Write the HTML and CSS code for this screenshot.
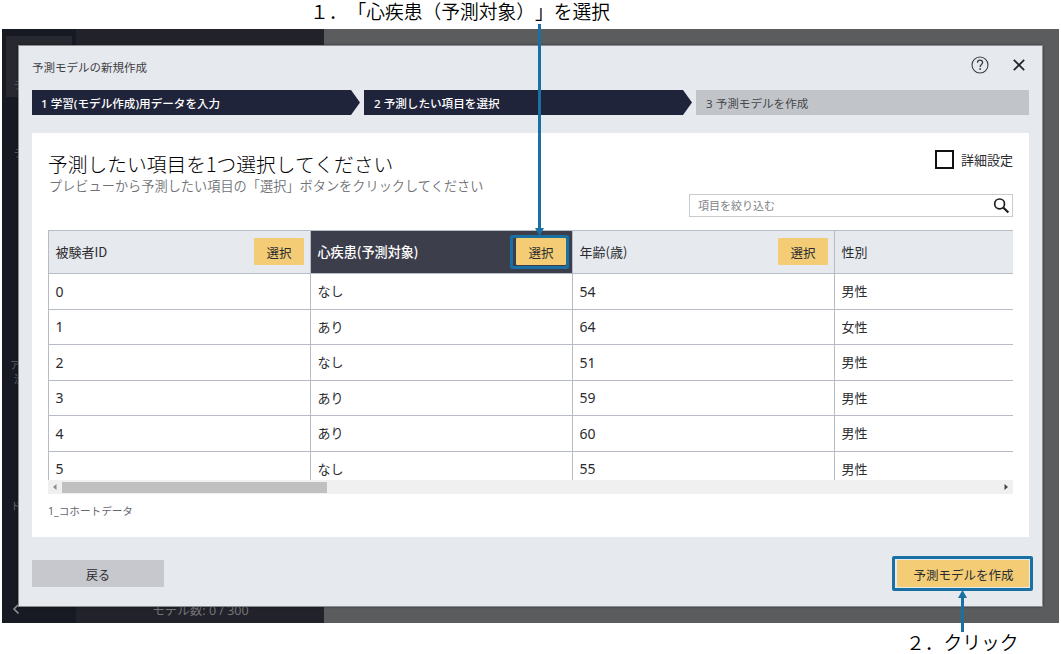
FILE: index.html
```html
<!DOCTYPE html>
<html lang="ja">
<head>
<meta charset="utf-8">
<title>予測モデルの新規作成</title>
<link rel="stylesheet" href="styles.css">
</head>
<body>
<div class="page">
  <div class="app">
    <nav class="sidebar">
      <span class="nav-active"></span>
      <span class="nav-text nav-a">デ</span>
      <span class="nav-text nav-b">デ</span>
      <span class="nav-text nav-c">アプ</span>
      <span class="nav-text nav-e">法</span>
      <span class="nav-text nav-d">ドキ</span>
      <svg class="nav-back" width="8" height="12" viewBox="0 0 8 12"><path d="M6.500 1.500 2 6l4.500 4.500" fill="none" stroke="#92959a" stroke-width="1.500"/></svg>
    </nav>
    <aside class="models"><span class="model-count">モデル数: 0 / 300</span></aside>
    <div class="backdrop"></div>
  </div>

  <section class="modal">
    <header class="modal-head">
      <h1 class="modal-title">予測モデルの新規作成</h1>
      <svg class="icon-help" width="18" height="18" viewBox="0 0 18 18"><circle cx="9" cy="9" r="8" fill="none" stroke="#3c3e42" stroke-width="1.100"/><path d="M6.500 6.700C6.500 5 7.500 4.200 9 4.200s2.600.9 2.600 2.300c0 1.900-2.500 2.100-2.500 4.400" fill="none" stroke="#3c3e42" stroke-width="1.300"/><circle cx="9.100" cy="13" r=".9" fill="#3c3e42"/></svg>
      <svg class="icon-close" width="12" height="12" viewBox="0 0 12 12"><path d="M.8.8l10.400 10.400M11.200.8.8 11.200" stroke="#222326" stroke-width="1.700"/></svg>
    </header>
    <ol class="steps">
      <li class="step step-on">1 学習(モデル作成)用データを入力</li>
      <li class="step step-on">2 予測したい項目を選択</li>
      <li class="step step-off">3 予測モデルを作成</li>
    </ol>
    <div class="content">
      <div class="intro">
        <div class="intro-text">
          <h2 class="heading">予測したい項目を1つ選択してください</h2>
          <p class="lead">プレビューから予測したい項目の「選択」ボタンをクリックしてください</p>
        </div>
        <label class="advanced"><span class="checkbox"></span><span class="advanced-text">詳細設定</span></label>
      </div>
      <div class="search">
        <span class="search-hint">項目を絞り込む</span>
        <svg width="17" height="17" viewBox="0 0 17 17"><circle cx="6.600" cy="6.900" r="4.900" fill="none" stroke="#1d1e21" stroke-width="1.700"/><path d="M10.200 10.500l5.200 5" stroke="#1d1e21" stroke-width="2.200"/></svg>
      </div>
      <div class="table">
        <div class="row row-head">
          <div class="cell">被験者ID<span class="pick">選択</span></div>
          <div class="cell cell-target">心疾患(予測対象)<span class="pick">選択</span></div>
          <div class="cell">年齢(歳)<span class="pick">選択</span></div>
          <div class="cell">性別</div>
        </div>
        <div class="row"><div class="cell num">0</div><div class="cell">なし</div><div class="cell num">54</div><div class="cell">男性</div></div>
        <div class="row"><div class="cell num">1</div><div class="cell">あり</div><div class="cell num">64</div><div class="cell">女性</div></div>
        <div class="row"><div class="cell num">2</div><div class="cell">なし</div><div class="cell num">51</div><div class="cell">男性</div></div>
        <div class="row"><div class="cell num">3</div><div class="cell">あり</div><div class="cell num">59</div><div class="cell">男性</div></div>
        <div class="row"><div class="cell num">4</div><div class="cell">あり</div><div class="cell num">60</div><div class="cell">男性</div></div>
        <div class="row"><div class="cell num">5</div><div class="cell">なし</div><div class="cell num">55</div><div class="cell">男性</div></div>
      </div>
      <div class="scrollbar">
        <svg width="14" height="14" viewBox="0 0 14 14"><path d="M8.500 4v6l-3.500-3z" fill="#8b8b8b"/></svg>
        <span class="thumb"></span>
        <svg width="14" height="14" viewBox="0 0 14 14"><path d="M5.500 4v6L9 7z" fill="#444"/></svg>
      </div>
      <p class="source">1_コホートデータ</p>
    </div>
    <footer class="modal-foot">
      <span class="btn btn-back">戻る</span>
      <span class="btn btn-create">予測モデルを作成</span>
    </footer>
  </section>

  <p class="note note-one">１．「心疾患（予測対象）」を選択</p>
  <svg class="arrow arrow-one" width="10" height="212" viewBox="0 0 10 212"><path d="M4.500 0v206" stroke="#1a70a3" stroke-width="3"/><path d="M0 204h9L4.500 212z" fill="#1a70a3"/></svg>
  <span class="ring ring-one"></span>
  <p class="note note-two">２．クリック</p>
  <svg class="arrow arrow-two" width="10" height="42" viewBox="0 0 10 42"><path d="M4.500 6v36" stroke="#1a70a3" stroke-width="3"/><path d="M0 8h9L4.500 0z" fill="#1a70a3"/></svg>
  <span class="ring ring-two"></span>
</div>
</body>
</html>
```
FILE: styles.css
```css
* { box-sizing: border-box; }
body { margin: 0; background: #fff; font-family: "Noto Sans", "Noto Sans CJK JP", sans-serif; color: #2b2c30; }
h1, h2, p, ol { margin: 0; padding: 0; font-weight: 400; }
svg { display: block; flex: none; }
.page { position: relative; width: 1061px; height: 654px; padding: 29px 2px 0; overflow: hidden; white-space: nowrap; }

.app { display: flex; height: 594px; }
.sidebar { position: relative; width: 74px; background: #171a22; overflow: hidden; }
.nav-active { display: block; width: 66px; height: 61px; margin: 7px 4px; background: #272830; }
.nav-text { position: absolute; font: 10px/13px "Noto Sans CJK JP", sans-serif; color: #65686e; }
.nav-a { left: 12px; top: 49px; }
.nav-b { left: 12px; top: 117px; }
.nav-c { left: 8px; top: 329px; }
.nav-e { left: 12px; top: 343px; }
.nav-d { left: 9px; top: 470px; }
.nav-back { position: absolute; left: 10px; top: 574px; }
.models { display: flex; align-items: flex-end; justify-content: center; width: 248px; background: #22222a; }
.model-count { font-size: 12.500px; line-height: 18px; padding: 0 0 3px 1px; color: #737479; }
.backdrop { flex: 1; background: #5b5c5e; }

.modal { position: absolute; left: 19px; top: 46px; width: 1023px; height: 560px; padding: 0 13px; background: #e6e9ee; box-shadow: 0 0 0 1px #8b8d90, 0 0 3px #111; }
.modal-head { display: flex; align-items: center; height: 44px; padding: 0 4px 6px 0; }
.modal-title { flex: 1; font: 11.500px/18px "Noto Sans CJK JP", sans-serif; color: #3f4043; padding-top: 3px; }
.icon-help { margin-right: 24px; }
.steps { display: grid; grid-template-columns: 328px 328px 333px; gap: 4px; height: 25px; list-style: none; }
.step { height: 25px; overflow: hidden; font: 11.600px/28px "Noto Sans", "Noto Sans CJK JP", sans-serif; padding-left: 10px; }
.step-on { background: #20243a; color: #fff; font-weight: 500; clip-path: polygon(0 0, calc(100% - 9px) 0, 100% 50%, calc(100% - 9px) 100%, 0 100%); }
.step-on:first-child { padding-left: 9px; }
.step-off { background: #c1c4c9; color: #47484c; }

.content { height: 404px; margin-top: 18px; padding: 17px 16px 0; background: #fff; }
.intro { display: flex; justify-content: space-between; height: 44px; }
.heading { font: 300 19.750px/28px "Noto Sans CJK JP", sans-serif; color: #000; }
.lead { font: 350 13.200px/16px "Noto Sans CJK JP", sans-serif; color: #707277; text-spacing-trim: space-all; padding-left: 1px; }
.advanced { display: flex; gap: 7px; height: 19px; align-items: center; }
.checkbox { width: 19px; height: 19px; margin-top: -1px; border: 2px solid #111; }
.advanced-text { font: 13px/20px "Noto Sans CJK JP", sans-serif; }
.search { display: flex; align-items: center; justify-content: space-between; width: 324px; height: 23px; margin-left: auto; padding: 0 2px 0 8px; border: 1px solid #c9cbcf; }
.search-hint { font: 11px/20px "Noto Sans CJK JP", sans-serif; color: #828386; padding-bottom: 2px; }

.table { height: 250px; margin-top: 13px; border-top: 1px solid #b8bcc6; overflow: hidden; }
.row { display: grid; grid-template-columns: 262px 262px 262px 179px; height: 35.500px; }
.cell { display: flex; align-items: center; justify-content: space-between; padding: 0 6px 0 6.500px; border-left: 1px solid #b8bcc6; border-bottom: 1px solid #b8bcc6; font: 13px/20px "Noto Sans CJK JP", sans-serif; }
.row-head { height: 43px; }
.row-head .cell { background: #e6e9ee; }
.row-head .cell-target { background: #3d3e4b; color: #fff; font-weight: 500; font-size: 13.100px; }
.row .num { padding-top: 1px; font-family: "Noto Sans", sans-serif; font-size: 14px; }
.pick { width: 50px; height: 27px; margin-top: -1px; border-radius: 1px; background: #f3cc75; color: #2b2c30; font-size: 12.500px; font-weight: 400; line-height: 29px; text-align: center; }
.scrollbar { display: flex; align-items: center; height: 14px; background: #f0f0f0; }
.thumb { width: 265px; height: 11px; margin-right: auto; background: #c0c0c0; }
.source { font: 10.600px/18px "Noto Sans", "Noto Sans CJK JP", sans-serif; color: #65676c; margin-top: 8px; }

.modal-foot { display: flex; justify-content: space-between; padding-top: 23px; }
.btn { height: 27px; line-height: 29px; font-family: "Noto Sans CJK JP", sans-serif; text-align: center; border-radius: 1px; font-size: 12px; }
.btn-back { width: 132px; background: #c7c8cd; }
.btn-create { width: 132px; padding-left: 1px; background: #f3cc75; font-size: 12.500px; }

.note { position: absolute; font: 350 18.750px/28px "Noto Sans CJK JP", sans-serif; color: #000; text-spacing-trim: space-all; }
.note-one { left: 310px; top: -3px; }
.note-two { left: 906px; top: 629px; line-height: 25px; }
.arrow { position: absolute; }
.arrow-one { left: 535px; top: 24px; }
.arrow-two { left: 958px; top: 590px; }
.ring { position: absolute; border: 3px solid #1a70a3; border-radius: 2px; }
.ring-one { left: 510px; top: 235px; width: 59px; height: 34px; }
.ring-two { left: 892px; top: 556px; width: 141px; height: 35px; }
```
